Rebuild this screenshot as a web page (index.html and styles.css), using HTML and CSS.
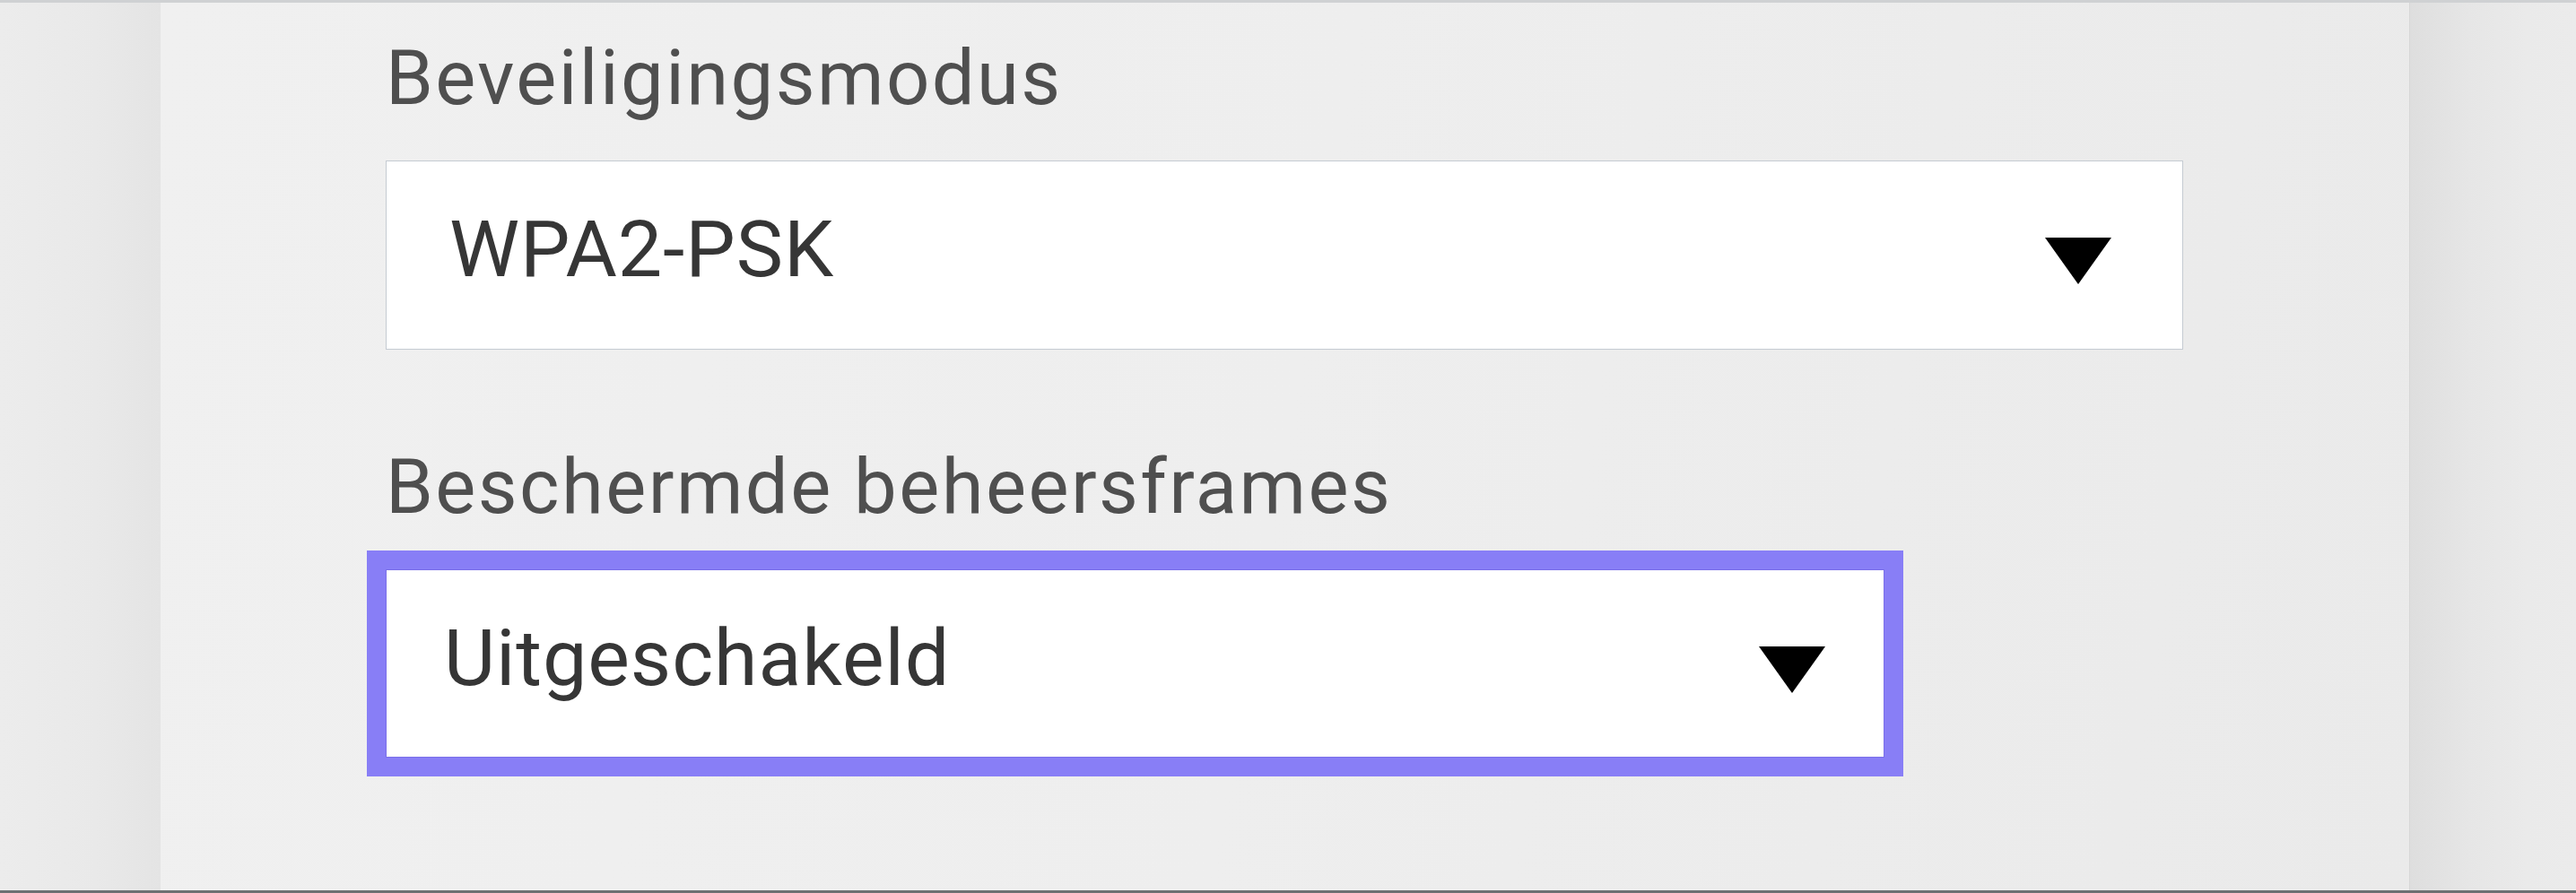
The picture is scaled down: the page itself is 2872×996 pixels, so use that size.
FILE: index.html
```html
<!DOCTYPE html>
<html lang="nl">
<head>
<meta charset="utf-8">
<title>Beveiliging</title>
<link rel="stylesheet" href="styles.css">
</head>
<body>
<div class="screen">
  <div class="gutter gutter-left"></div>
  <main class="panel">
    <div class="field">
      <label class="field-label">Beveiligingsmodus</label>
      <div class="select">
        <span class="select-value">WPA2-PSK</span>
        <svg class="select-arrow" width="74" height="52" viewBox="0 0 74 52"><polygon points="0,0 74,0 37,52" fill="#000"/></svg>
      </div>
    </div>
    <div class="field">
      <label class="field-label">Beschermde beheersframes</label>
      <div class="select select-focused">
        <span class="select-value">Uitgeschakeld</span>
        <svg class="select-arrow" width="74" height="52" viewBox="0 0 74 52"><polygon points="0,0 74,0 37,52" fill="#000"/></svg>
      </div>
    </div>
  </main>
  <div class="gutter gutter-right"></div>
</div>
</body>
</html>
```

FILE: styles.css
```css
html, body {
  margin: 0;
  padding: 0;
  width: 2872px;
  height: 996px;
  overflow: hidden;
  background: #ebebeb;
}

.screen {
  display: flex;
  width: 2872px;
  height: 996px;
  box-sizing: border-box;
  border-top: 3px solid #cfd1d3;
  border-bottom: 3px solid #6d7072;
}

.gutter-left {
  width: 179px;
  flex: none;
  background: linear-gradient(to right, #ececec 0%, #e9e9e9 60%, #e4e4e4 100%);
}

.gutter-right {
  width: 185px;
  flex: none;
  border-left: 1px solid #d6d6d6;
  background: linear-gradient(to right, #dedede 0%, #e6e6e6 35%, #eaeaea 70%, #ebebeb 100%);
}

.panel {
  flex: 1;
  box-sizing: border-box;
  padding: 34px 0 0 251px;
  background: linear-gradient(100deg, #f0f0f0 0%, #eeeeee 50%, #eaeaea 100%);
  display: flex;
  flex-direction: column;
  gap: 103px;
  font-family: Roboto, "Liberation Sans", sans-serif;
}

.field {
  display: flex;
  flex-direction: column;
  align-items: flex-start;
  gap: 42px;
}

.field-label {
  font-size: 85px;
  line-height: 100px;
  letter-spacing: 2.4px;
  color: #4f4f4f;
  font-weight: 400;
}

.select {
  box-sizing: border-box;
  width: 2004px;
  height: 211px;
  background: #ffffff;
  border: 1px solid #c5cbd2;
  display: flex;
  align-items: center;
  justify-content: space-between;
  padding: 0 79px 0 70px;
}

.select-focused {
  width: 1671px;
  height: 210px;
  border-color: #7a6fe9;
  outline: 21px solid #887ef6;
  padding-right: 65px;
  padding-left: 64px;
}

.select-value {
  font-size: 88px;
  line-height: 100px;
  letter-spacing: 0.9px;
  color: #363636;
  margin-bottom: 13px;
}

.select-arrow {
  display: block;
  margin-top: 13px;
}
```
